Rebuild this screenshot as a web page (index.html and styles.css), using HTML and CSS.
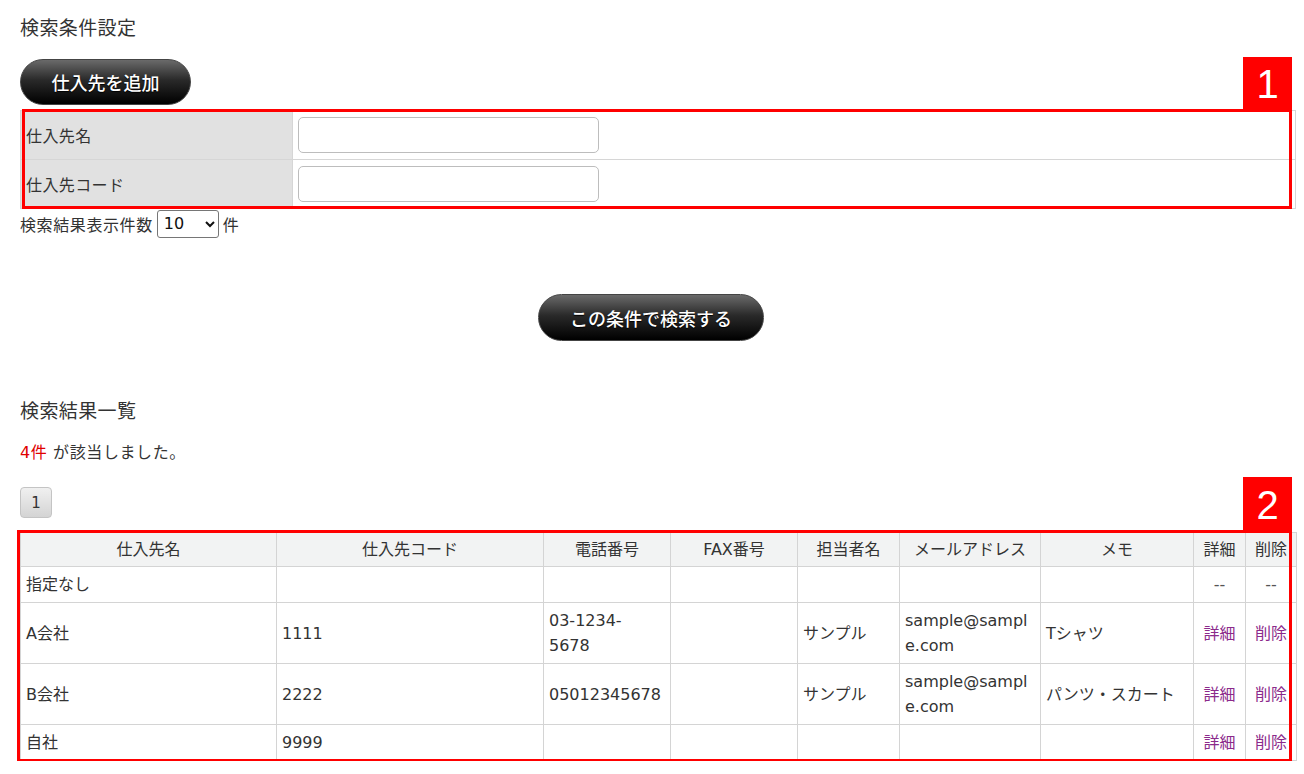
FILE: index.html
```html
<!DOCTYPE html>
<html lang="ja">
<head>
<meta charset="utf-8">
<title>仕入先検索</title>
<link rel="stylesheet" href="styles.css">
</head>
<body>
<div class="page">
  <h2 class="section-title">検索条件設定</h2>
  <div class="add-row">
    <button class="pill-btn add-btn" type="button">仕入先を追加</button>
  </div>
  <div class="annot-wrap cond-wrap">
    <table class="cond-table">
      <tr>
        <th>仕入先名</th>
        <td><input class="text-input" type="text"></td>
      </tr>
      <tr>
        <th>仕入先コード</th>
        <td><input class="text-input" type="text"></td>
      </tr>
    </table>
    <div class="annot-box box1"><span class="annot-badge">1</span></div>
  </div>
  <div class="count-row">
    <span class="count-label">検索結果表示件数</span>
    <select class="count-select"><option>10</option><option>20</option><option>50</option></select>
    <span>件</span>
  </div>
  <div class="search-row">
    <button class="pill-btn search-btn" type="button">この条件で検索する</button>
  </div>

  <h2 class="section-title result-title">検索結果一覧</h2>
  <p class="hit-count"><span class="hit-num">4件</span> が該当しました。</p>
  <div class="pager"><span class="page-num">1</span></div>

  <div class="annot-wrap result-wrap">
    <table class="result-table">
      <colgroup>
        <col class="c-name"><col class="c-code"><col class="c-tel"><col class="c-fax"><col class="c-person"><col class="c-mail"><col class="c-memo"><col class="c-detail"><col class="c-del">
      </colgroup>
      <thead>
        <tr>
          <th>仕入先名</th><th>仕入先コード</th><th>電話番号</th><th>FAX番号</th><th>担当者名</th><th>メールアドレス</th><th>メモ</th><th>詳細</th><th>削除</th>
        </tr>
      </thead>
      <tbody>
        <tr>
          <td>指定なし</td><td></td><td></td><td></td><td></td><td></td><td></td><td class="center muted">--</td><td class="center muted">--</td>
        </tr>
        <tr>
          <td>A会社</td><td>1111</td><td>03-1234-<br>5678</td><td></td><td>サンプル</td><td class="mail">sample@sample.com</td><td>Tシャツ</td><td class="center"><a class="link" href="#">詳細</a></td><td class="center"><a class="link" href="#">削除</a></td>
        </tr>
        <tr>
          <td>B会社</td><td>2222</td><td>05012345678</td><td></td><td>サンプル</td><td class="mail">sample@sample.com</td><td>パンツ・スカート</td><td class="center"><a class="link" href="#">詳細</a></td><td class="center"><a class="link" href="#">削除</a></td>
        </tr>
        <tr>
          <td>自社</td><td>9999</td><td></td><td></td><td></td><td></td><td></td><td class="center"><a class="link" href="#">詳細</a></td><td class="center"><a class="link" href="#">削除</a></td>
        </tr>
      </tbody>
    </table>
    <div class="annot-box box2"><span class="annot-badge">2</span></div>
  </div>
</div>
</body>
</html>
```

FILE: styles.css
```css
html, body {
  margin: 0;
  padding: 0;
  background: #ffffff;
}

body {
  font-family: "DejaVu Sans", "Noto Sans CJK JP", sans-serif;
  font-size: 16px;
  color: #333333;
}

.page {
  padding: 14px 8px 0 20px;
}

.section-title {
  margin: 0;
  font-size: 19px;
  font-weight: normal;
  line-height: 28px;
  letter-spacing: 0.4px;
  color: #333333;
}

.add-row {
  margin-top: 17px;
  display: flex;
}

.pill-btn {
  font-family: "Noto Sans CJK JP", sans-serif;
  font-size: 18px;
  font-weight: 500;
  color: #ffffff;
  text-shadow: 0 1px 1px #000000;
  background: linear-gradient(to bottom, #6a6a6a 0%, #2a2a2a 45%, #000000 100%);
  border: 1px solid #444444;
  border-radius: 24px;
  padding: 0;
  cursor: pointer;
}

.add-btn {
  width: 171px;
  height: 46px;
}

.annot-wrap {
  position: relative;
}

.cond-wrap {
  padding-top: 5px;
}

.cond-table {
  width: 1276px;
  border-collapse: collapse;
}

.cond-table th,
.cond-table td {
  border: 1px solid #d6d6d6;
  padding: 6px 5px;
  height: 36px;
  vertical-align: middle;
}

.cond-table th {
  width: 261px;
  background: #e1e1e1;
  font-weight: normal;
  text-align: left;
  font-family: "Noto Sans CJK JP", sans-serif;
  letter-spacing: 0.4px;
}

.text-input {
  display: block;
  box-sizing: border-box;
  width: 301px;
  height: 36px;
  border: 1px solid #bdbdbd;
  border-radius: 5px;
  padding: 0 8px;
  font-size: 16px;
  background: #ffffff;
}

.annot-box {
  position: absolute;
  border: 3px solid #ff0000;
  box-sizing: border-box;
  pointer-events: none;
}

.box1 {
  left: 2px;
  top: 4px;
  width: 1270px;
  height: 100px;
}

.box2 {
  left: -3px;
  top: -2px;
  width: 1275px;
  height: 232px;
}

.annot-badge {
  position: absolute;
  right: -3px;
  bottom: 100%;
  width: 49px;
  height: 55px;
  background: #ff0000;
  color: #ffffff;
  font-family: "Liberation Sans", Arial, sans-serif;
  font-size: 40px;
  line-height: 55px;
  text-align: center;
}

.box2 .annot-badge {
  height: 56px;
  line-height: 56px;
}

.count-row {
  display: flex;
  align-items: center;
  gap: 4px;
  height: 29px;
  font-family: "Noto Sans CJK JP", sans-serif;
  font-size: 16px;
}

.count-label {
  letter-spacing: 0.6px;
}

.count-select {
  width: 62px;
  height: 28px;
  font-family: "DejaVu Sans", sans-serif;
  font-size: 16px;
  color: #111111;
  border: 1px solid #767676;
  border-radius: 3px;
  background: #ffffff;
  padding: 0 2px;
}

.search-row {
  display: flex;
  justify-content: center;
  margin: 56px -8px 0 -20px;
  padding-right: 2px;
}

.search-btn {
  width: 226px;
  height: 47px;
}

.result-title {
  margin-top: 56px;
}

.hit-count {
  margin: 16px 0 0;
  line-height: 24px;
  font-family: "DejaVu Sans", "Noto Sans CJK JP", sans-serif;
  font-size: 16px;
  letter-spacing: 0.6px;
}

.hit-num {
  color: #e00000;
}

.pager {
  margin-top: 22px;
  display: flex;
}

.page-num {
  box-sizing: border-box;
  width: 32px;
  height: 31px;
  display: flex;
  align-items: center;
  justify-content: center;
  border: 1px solid #c4c4c4;
  border-radius: 4px;
  background: linear-gradient(to bottom, #f0f0f0, #d4d4d4);
  font-size: 15px;
  color: #333333;
}

.result-wrap {
  margin-top: 14px;
}

.result-table {
  width: 1276px;
  table-layout: fixed;
  border-collapse: collapse;
}

.c-name { width: 256px; }
.c-code { width: 267px; }
.c-tel { width: 127px; }
.c-fax { width: 127px; }
.c-person { width: 102px; }
.c-mail { width: 141px; }
.c-memo { width: 153px; }
.c-detail { width: 52px; }
.c-del { width: 51px; }

.result-table th,
.result-table td {
  border: 1px solid #d4d4d4;
  padding: 5px 5px;
  line-height: 25px;
  vertical-align: middle;
  text-align: left;
  font-weight: normal;
}

.result-table th {
  background: #f2f3f3;
  text-align: center;
  padding: 4px 0;
  white-space: nowrap;
}

.result-table td.center {
  text-align: center;
  padding-left: 0;
  padding-right: 0;
}

.result-table td.mail {
  word-break: break-all;
}

.muted {
  color: #555555;
}

.link {
  color: #8b2a8b;
  text-decoration: none;
}
```
